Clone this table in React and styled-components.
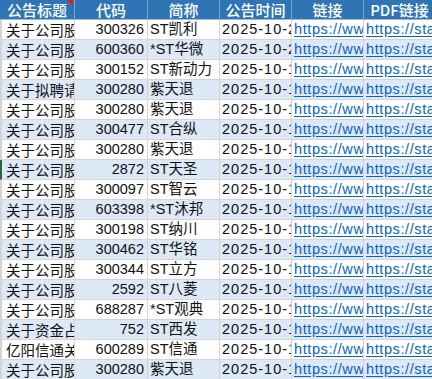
import React from "react";
import styled, { createGlobalStyle } from "styled-components";

const Global = createGlobalStyle`
  html, body { margin: 0; padding: 0; background: #fff; overflow: hidden; }
  body { width: 432px; height: 379px; }
`;

const Sheet = styled.div`
  width: 432px;
  height: 379px;
  overflow: hidden;
  background: #fff;
`;

const Grid = styled.div`
  display: grid;
  grid-template-columns: 75px 73px 72px 72px 72px 72px;
  grid-auto-rows: 20px;
  width: 436px;
  font-family: "Liberation Sans", "Noto Sans CJK SC", sans-serif;
  font-size: 14.5px;
`;

const HeadCell = styled.div`
  position: relative;
  box-sizing: border-box;
  background: #2f75b5;
  color: #fff;
  font-family: "Noto Sans CJK SC", "Liberation Sans", sans-serif;
  font-size: 15px;
  font-weight: 500;
  line-height: 19px;
  text-align: center;
  white-space: nowrap;
  overflow: hidden;
  border-right: 1px solid #7fa7d2;
  border-bottom: 1px solid #9fb9d6;
  ${(p) =>
    p.$note &&
    `
    &::after {
      content: "";
      position: absolute;
      top: 0;
      right: 1px;
      width: 0;
      height: 0;
      border-top: 6px solid #e0201f;
      border-left: 6px solid transparent;
    }
  `}
`;

const Cell = styled.div`
  box-sizing: border-box;
  background: ${(p) => (p.$alt ? "#dde9f7" : "#ffffff")};
  color: #111;
  line-height: 19px;
  white-space: nowrap;
  overflow: hidden;
  border-right: 1px solid #d4d4d4;
  border-bottom: 1px solid #d4d4d4;
  text-align: ${(p) => p.$align || "left"};
  letter-spacing: ${(p) => p.$spacing || "0"};
  padding: ${(p) =>
    p.$align === "right" ? "0 3px 0 0" : p.$first ? "0 0 0 5px" : "0 0 0 2px"};
  ${(p) => p.$first && `border-left: 2px solid ${p.$mark ? "#1e6b3e" : "#d4d4d4"}; padding-left: 4px;`}
`;

const TitleText = styled.span`
  font-family: "Noto Sans CJK SC", sans-serif;
`;

const Link = styled.span`
  color: #0563c1;
  text-decoration: underline;
  text-underline-offset: 2px;
  letter-spacing: 0.6px;
`;

const rows = [
  ["关于公司股票", "300326", "ST凯利", "2025-10-24"],
  ["关于公司股票", "600360", "*ST华微", "2025-10-20"],
  ["关于公司股票", "300152", "ST新动力", "2025-10-17"],
  ["关于拟聘请会计师", "300280", "紫天退", "2025-10-17"],
  ["关于公司股票", "300280", "紫天退", "2025-10-16"],
  ["关于公司股票", "300477", "ST合纵", "2025-10-16"],
  ["关于公司股票", "300280", "紫天退", "2025-10-15"],
  ["关于公司股票", "2872", "ST天圣", "2025-10-15"],
  ["关于公司股票", "300097", "ST智云", "2025-10-14"],
  ["关于公司股票", "603398", "*ST沐邦", "2025-10-14"],
  ["关于公司股票", "300198", "ST纳川", "2025-10-13"],
  ["关于公司股票", "300462", "ST华铭", "2025-10-13"],
  ["关于公司股票", "300344", "ST立方", "2025-10-12"],
  ["关于公司股票", "2592", "ST八菱", "2025-10-11"],
  ["关于公司股票", "688287", "*ST观典", "2025-10-11"],
  ["关于资金占用", "752", "ST西发", "2025-10-10"],
  ["亿阳信通关于", "600289", "ST信通", "2025-10-10"],
  ["关于公司股票", "300280", "紫天退", "2025-10-10"],
];

const headers = ["公告标题", "代码", "简称", "公告时间", "链接", "PDF链接"];

export default function App() {
  return (
    <Sheet>
      <Global />
      <Grid>
        {headers.map((h, i) => (
          <HeadCell key={h} $note={i === 0}>
            {h}
          </HeadCell>
        ))}
        {rows.map((r, i) => {
          const alt = i % 2 === 1;
          return (
            <React.Fragment key={i}>
              <Cell $alt={alt} $first $mark={i === 7}>
                <TitleText>{r[0]}</TitleText>
              </Cell>
              <Cell $alt={alt} $align="right">
                {r[1]}
              </Cell>
              <Cell $alt={alt}>{r[2]}</Cell>
              <Cell $alt={alt} $spacing="1px">
                {r[3]}
              </Cell>
              <Cell $alt={alt}>
                <Link>https://www.cninfo.com.cn</Link>
              </Cell>
              <Cell $alt={alt}>
                <Link>https://static.cninfo.com.cn</Link>
              </Cell>
            </React.Fragment>
          );
        })}
      </Grid>
    </Sheet>
  );
}
